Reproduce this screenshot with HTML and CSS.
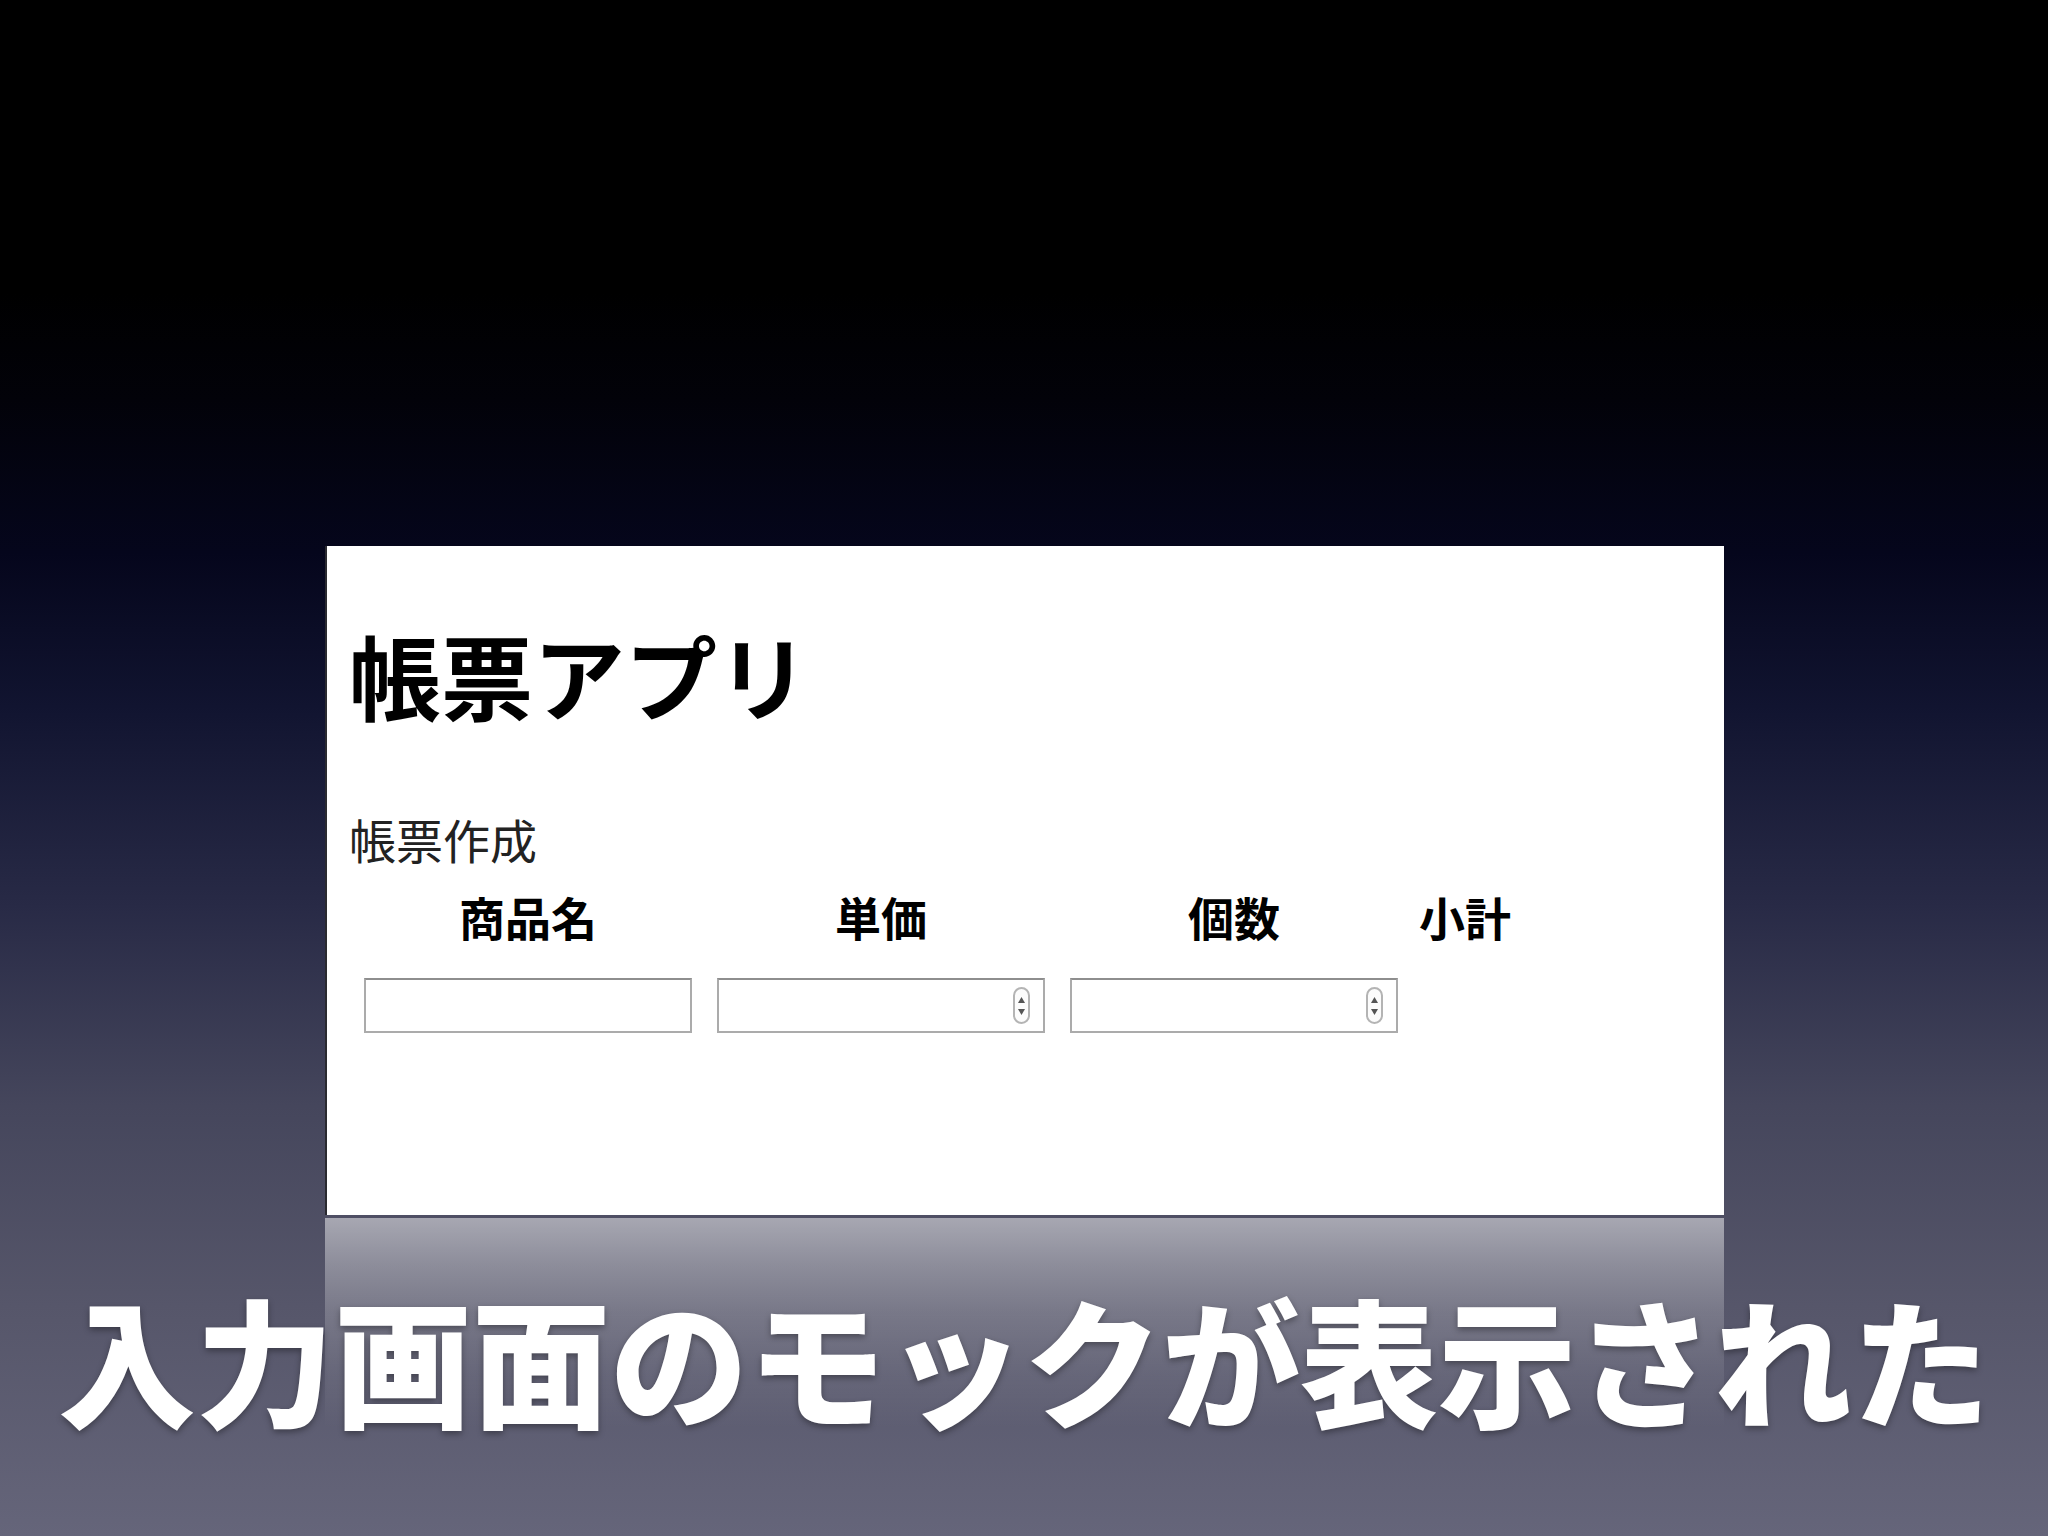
FILE: index.html
```html
<!DOCTYPE html>
<html lang="ja">
<head>
<meta charset="utf-8">
<title>入力画面のモックが表示された</title>
<link rel="stylesheet" href="styles.css">
</head>
<body>
<div class="slide">
  <div class="panel">
    <h1 class="app-title">帳票アプリ</h1>
    <div class="section-title">帳票作成</div>
    <div class="form-grid">
      <div class="col-head">商品名</div>
      <div class="col-head">単価</div>
      <div class="col-head">個数</div>
      <div class="col-head col-subtotal">小計</div>
      <div class="field"><input class="text-input" type="text"></div>
      <div class="field">
        <input class="text-input" type="text">
        <span class="spinner">
          <svg viewBox="0 0 13 33" width="13" height="33"><path d="M6.5 8 L10 14 L3 14 Z" fill="#555"/><path d="M6.5 26 L10 20 L3 20 Z" fill="#555"/></svg>
        </span>
      </div>
      <div class="field">
        <input class="text-input" type="text">
        <span class="spinner">
          <svg viewBox="0 0 13 33" width="13" height="33"><path d="M6.5 8 L10 14 L3 14 Z" fill="#555"/><path d="M6.5 26 L10 20 L3 20 Z" fill="#555"/></svg>
        </span>
      </div>
      <div class="field empty"></div>
    </div>
  </div>
  <div class="caption">入力画面のモックが表示された</div>
</div>
</body>
</html>
```

FILE: styles.css
```css
html, body {
  margin: 0;
  padding: 0;
}

body {
  width: 2048px;
  height: 1536px;
  overflow: hidden;
  font-family: "Noto Sans CJK JP", "Noto Sans", sans-serif;
}

.slide {
  width: 2048px;
  height: 1536px;
  display: flex;
  flex-direction: column;
  background: linear-gradient(to bottom,
    #000000 0%,
    #000000 19%,
    #020209 26%,
    #05061c 36%,
    #111430 46%,
    #282a46 59%,
    #45465c 72%,
    #56566a 85%,
    #65657a 100%);
}

.panel {
  position: relative;
  box-sizing: border-box;
  margin: 546px 0 0 325px;
  width: 1399px;
  height: 669px;
  background: #ffffff;
  border-left: 2px solid #2a2a30;
  padding-left: 22px;
}

.panel::after {
  content: "";
  position: absolute;
  left: -2px;
  right: 0;
  top: calc(100% + 3px);
  height: 210px;
  background: linear-gradient(to bottom,
    rgba(255, 255, 255, 0.50) 0%,
    rgba(255, 255, 255, 0.34) 22%,
    rgba(255, 255, 255, 0.20) 45%,
    rgba(255, 255, 255, 0.07) 75%,
    rgba(255, 255, 255, 0) 100%);
}

.app-title {
  margin: 82px 0 0 0;
  font-size: 92px;
  line-height: 1;
  font-weight: 700;
  color: #000;
}

.section-title {
  margin-top: 95px;
  font-size: 47px;
  line-height: 1;
  font-weight: 400;
  color: #222;
}

.form-grid {
  margin: 31px 0 0 15px;
  display: grid;
  grid-template-columns: 328px 328px 328px auto;
  column-gap: 25px;
  row-gap: 39px;
  justify-content: start;
}

.col-head {
  font-size: 46px;
  line-height: 1;
  font-weight: 700;
  color: #000;
  text-align: center;
}

.col-subtotal {
  margin-left: -4px;
}

.field {
  position: relative;
  height: 55px;
}

.text-input {
  box-sizing: border-box;
  display: block;
  width: 328px;
  height: 55px;
  margin: 0;
  padding: 0;
  background: #fff;
  border: 2px solid #ababab;
  border-top-color: #8e8e8e;
  border-radius: 0;
  outline: none;
}

.spinner {
  position: absolute;
  right: 15px;
  top: 9px;
  box-sizing: border-box;
  width: 17px;
  height: 37px;
  border: 2px solid #b4b4b4;
  border-radius: 9px;
  background: #fcfcfc;
  display: flex;
  align-items: center;
  justify-content: center;
}

.spinner svg {
  display: block;
  width: 13px;
  height: 33px;
}

.caption {
  position: relative;
  margin-top: 73px;
  text-align: center;
  font-size: 138px;
  line-height: 1;
  font-weight: 900;
  color: #ffffff;
  white-space: nowrap;
  text-shadow: 0 3px 6px rgba(0, 0, 0, 0.35);
}
```
